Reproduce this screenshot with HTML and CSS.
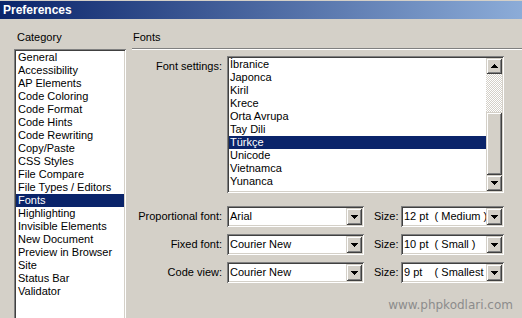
FILE: index.html
```html
<!DOCTYPE html>
<html>
<head>
<meta charset="utf-8">
<title>Preferences</title>
<link rel="stylesheet" href="styles.css">
</head>
<body>
<div class="window">
  <div class="titlebar">Preferences</div>
  <div class="main">
    <div class="cat-col">
      <div class="heading">Category</div>
      <ul class="sunken cat-list">
        <li>General</li>
        <li>Accessibility</li>
        <li>AP Elements</li>
        <li>Code Coloring</li>
        <li>Code Format</li>
        <li>Code Hints</li>
        <li>Code Rewriting</li>
        <li>Copy/Paste</li>
        <li>CSS Styles</li>
        <li>File Compare</li>
        <li>File Types / Editors</li>
        <li class="sel">Fonts</li>
        <li>Highlighting</li>
        <li>Invisible Elements</li>
        <li>New Document</li>
        <li>Preview in Browser</li>
        <li>Site</li>
        <li>Status Bar</li>
        <li>Validator</li>
      </ul>
    </div>
    <div class="panel">
      <div class="heading panel-heading">Fonts</div>
      <div class="sep"></div>
      <div class="settings">
        <div class="row row-list">
          <span class="lbl">Font settings:</span>
          <div class="sunken enc-list">
            <ul class="items">
              <li>İbranice</li>
              <li>Japonca</li>
              <li>Kiril</li>
              <li>Krece</li>
              <li>Orta Avrupa</li>
              <li>Tay Dili</li>
              <li class="sel">Türkçe</li>
              <li>Unicode</li>
              <li>Vietnamca</li>
              <li>Yunanca</li>
            </ul>
            <div class="scrollbar">
              <div class="raised sb-btn"><svg width="7" height="4" shape-rendering="crispEdges"><path d="M3 0H4V1H5V2H6V3H7V4H0V3H1V2H2V1H3Z"/></svg></div>
              <div class="sb-track"></div>
              <div class="raised sb-thumb"></div>
              <div class="raised sb-btn"><svg width="7" height="4" shape-rendering="crispEdges"><path d="M0 0H7V1H6V2H5V3H4V4H3V3H2V2H1V1H0Z"/></svg></div>
            </div>
          </div>
        </div>
        <div class="row row-combo">
          <span class="lbl">Proportional font:</span>
          <div class="sunken combo font-combo"><span class="val">Arial</span><span class="raised dd"><svg width="7" height="4" shape-rendering="crispEdges"><path d="M0 0H7V1H6V2H5V3H4V4H3V3H2V2H1V1H0Z"/></svg></span></div>
          <span class="size-lbl">Size:</span>
          <div class="sunken combo size-combo"><span class="val">12 pt  ( Medium )</span><span class="raised dd"><svg width="7" height="4" shape-rendering="crispEdges"><path d="M0 0H7V1H6V2H5V3H4V4H3V3H2V2H1V1H0Z"/></svg></span></div>
        </div>
        <div class="row row-combo">
          <span class="lbl">Fixed font:</span>
          <div class="sunken combo font-combo"><span class="val">Courier New</span><span class="raised dd"><svg width="7" height="4" shape-rendering="crispEdges"><path d="M0 0H7V1H6V2H5V3H4V4H3V3H2V2H1V1H0Z"/></svg></span></div>
          <span class="size-lbl">Size:</span>
          <div class="sunken combo size-combo"><span class="val">10 pt  ( Small )</span><span class="raised dd"><svg width="7" height="4" shape-rendering="crispEdges"><path d="M0 0H7V1H6V2H5V3H4V4H3V3H2V2H1V1H0Z"/></svg></span></div>
        </div>
        <div class="row row-combo">
          <span class="lbl">Code view:</span>
          <div class="sunken combo font-combo"><span class="val">Courier New</span><span class="raised dd"><svg width="7" height="4" shape-rendering="crispEdges"><path d="M0 0H7V1H6V2H5V3H4V4H3V3H2V2H1V1H0Z"/></svg></span></div>
          <span class="size-lbl">Size:</span>
          <div class="sunken combo size-combo"><span class="val">9 pt    ( Smallest )</span><span class="raised dd"><svg width="7" height="4" shape-rendering="crispEdges"><path d="M0 0H7V1H6V2H5V3H4V4H3V3H2V2H1V1H0Z"/></svg></span></div>
        </div>
      </div>
      <div class="watermark">www.phpkodlari.com</div>
    </div>
  </div>
</div>
</body>
</html>
```

FILE: styles.css
```css
html, body {
  margin: 0;
  padding: 0;
}

body {
  width: 522px;
  height: 318px;
  overflow: hidden;
  background: #d4d0c8;
  color: #000;
  font-family: "Liberation Sans", Arial, sans-serif;
  font-size: 11px;
}

ul {
  margin: 0;
  padding: 0;
  list-style: none;
}

.window {
  padding-top: 1px;
  height: 317px;
  overflow: hidden;
}

.titlebar {
  height: 18px;
  line-height: 18px;
  padding-left: 3px;
  font-size: 12px;
  font-weight: bold;
  color: #fff;
  background: linear-gradient(to right, #0a246a, #8cacd8);
}

.main {
  display: flex;
  padding: 12px 0 0 14px;
}

.heading {
  line-height: 13px;
  padding-left: 3px;
}

.cat-col {
  width: 112px;
  flex: none;
}

.sunken {
  box-sizing: border-box;
  padding: 2px;
  background: #fff;
  box-shadow: inset 1px 1px #808080, inset -1px -1px #fff,
              inset 2px 2px #404040, inset -2px -2px #d4d0c8;
}

.raised {
  box-sizing: border-box;
  background: #d4d0c8;
  box-shadow: inset 1px 1px #d4d0c8, inset -1px -1px #404040,
              inset 2px 2px #fff, inset -2px -2px #808080;
}

.cat-list {
  margin-top: 5px;
  height: 290px;
}

.cat-list li {
  height: 13px;
  line-height: 13px;
  padding-left: 2px;
  white-space: nowrap;
}

.sel {
  background: #0a246a;
  color: #fff;
}

.panel {
  flex: 1;
  margin-left: 6px;
}

.panel-heading {
  padding-left: 1px;
}

.sep {
  margin-top: 4px;
  height: 1px;
  background: #808080;
  border-bottom: 1px solid #fff;
}

.settings {
  margin-top: 6px;
}

.row {
  display: flex;
  align-items: center;
}

.row-list {
  align-items: flex-start;
}

.lbl {
  width: 90px;
  margin-right: 5px;
  text-align: right;
  line-height: 13px;
  white-space: nowrap;
}

.row-list .lbl {
  padding-top: 4px;
}

.enc-list {
  width: 277px;
  height: 137px;
  display: flex;
}

.items {
  flex: 1;
  overflow: hidden;
}

.items li {
  height: 13px;
  line-height: 13px;
  padding-left: 1px;
}

.scrollbar {
  width: 16px;
  display: flex;
  flex-direction: column;
}

.sb-btn {
  height: 16px;
  display: flex;
  align-items: center;
  justify-content: center;
}

.sb-btn svg,
.dd svg {
  display: block;
}

.sb-track {
  height: 38px;
  background: repeating-conic-gradient(#d4d0c8 0 25%, #fff 0 50%) 0 0 / 2px 2px;
}

.sb-thumb {
  height: 63px;
}

.row-combo {
  margin-top: 7px;
}

.row-list + .row-combo {
  margin-top: 13px;
}

.combo {
  height: 21px;
  display: flex;
}

.font-combo {
  width: 137px;
}

.size-combo {
  width: 103px;
}

.val {
  flex: 1;
  min-width: 0;
  padding-left: 1px;
  line-height: 17px;
  white-space: pre;
  overflow: hidden;
}

.dd {
  width: 16px;
  height: 17px;
  flex: none;
  display: flex;
  align-items: center;
  justify-content: center;
}

.size-lbl {
  margin-left: 10px;
  width: 27px;
  line-height: 13px;
}

.watermark {
  margin-top: 15px;
  padding-right: 9px;
  text-align: right;
  font-family: "DejaVu Sans", sans-serif;
  font-size: 12px;
  line-height: 15px;
  color: #8c8c8c;
}
```
